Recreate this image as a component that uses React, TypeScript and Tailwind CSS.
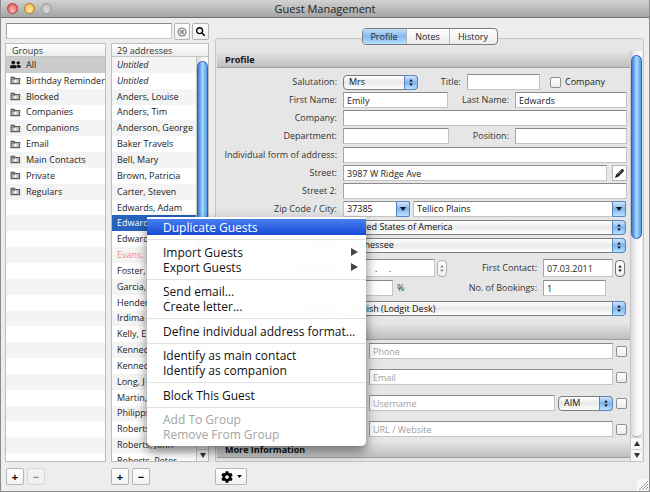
import { useState, type ReactNode } from "react";
import { FaCog, FaSearch, FaUserFriends } from "react-icons/fa";

const groups = [
  "All",
  "Birthday Reminder",
  "Blocked",
  "Companies",
  "Companions",
  "Email",
  "Main Contacts",
  "Private",
  "Regulars",
];

const addresses = [
  "Untitled",
  "Untitled",
  "Anders, Louise",
  "Anders, Tim",
  "Anderson, George",
  "Baker Travels",
  "Bell, Mary",
  "Brown, Patricia",
  "Carter, Steven",
  "Edwards, Adam",
  "Edwards",
  "Edwards",
  "Evans,",
  "Foster,",
  "Garcia,",
  "Henders",
  "Irdima",
  "Kelly, E",
  "Kenned",
  "Kenned",
  "Long, J",
  "Martin,",
  "Philipps",
  "Roberts",
  "Roberts, John",
  "Roberts, Peter",
];

const SELECTED = 10;
const ROW_COUNT = 26;

const menu = [
  ["Duplicate Guests"],
  ["Import Guests", "Export Guests"],
  ["Send email...", "Create letter..."],
  ["Define individual address format..."],
  ["Identify as main contact", "Identify as companion"],
  ["Block This Guest"],
  ["Add To Group", "Remove From Group"],
];

const field =
  "h-4 min-w-0 border border-[#c4c4c4] border-t-[#8a8a8a] border-l-[#a5a5a5] bg-white px-[3px] text-[9px] leading-3 text-[#222] outline-none placeholder:text-[#a0a0a0]";
const box =
  "size-[11px] shrink-0 appearance-none rounded-[2px] border border-[#8f8f8f] bg-linear-to-b from-white to-[#ececec]";
const smallButton =
  "flex h-[17px] items-center justify-center rounded-[2px] border border-[#b4b4b4] bg-linear-to-b from-white to-[#f1f1f1] text-black";

function FolderIcon() {
  return (
    <svg viewBox="0 0 12 10" className="h-[9px] w-[11px]" fill="none">
      <path d="M1 8.5V1.5h3.6l1 1.3h5v5.7z" fill="#b5b5b5" stroke="#5c5c5c" strokeWidth="1.2" />
      <path d="M1 3.4h4.5" stroke="#5c5c5c" />
      <circle cx="5.9" cy="5.8" r="1.6" fill="#f4f4f4" />
    </svg>
  );
}

function Arrows({ dim = false }: { dim?: boolean }) {
  return (
    <svg viewBox="0 0 6 10" className="h-[9px] w-[6px]" fill={dim ? "#888" : "#111"}>
      <path d="M3 1l2 2.8H1zM3 9l2-2.8H1z" />
    </svg>
  );
}

function Popup({ id, label, options, combo = false, className = "" }: {
  id: string;
  label?: string;
  options: string[];
  combo?: boolean;
  className?: string;
}) {
  const shape = combo
    ? "h-4 border border-[#c4c4c4] border-t-[#8a8a8a] bg-white pl-[3px]"
    : "h-[15px] rounded-[4px] border border-[#7d7d7d] bg-linear-to-b from-white via-[#e9e9e9] to-white pl-[5px]";
  return (
    <div className={`relative ${className}`}>
      <select
        id={id}
        aria-label={label}
        className={`block w-full appearance-none text-[9px] leading-3 text-[#111] outline-none ${shape}`}
      >
        {options.map((o) => <option key={o}>{o}</option>)}
      </select>
      <span
        className={`pointer-events-none absolute inset-y-0 right-0 flex w-[14px] items-center justify-center border border-[#5b86c2] bg-linear-to-b from-[#d5e7fb] via-[#7db3ee] to-[#b9e2ff] ${combo ? "rounded-r-[2px]" : "rounded-r-[4px]"}`}
      >
        {combo ? (
          <svg viewBox="0 0 6 4" className="h-1 w-[6px]"><path d="M0 0h6L3 4z" fill="#111" /></svg>
        ) : (
          <Arrows />
        )}
      </span>
    </div>
  );
}

function Label({ htmlFor, children, className = "w-[120px]" }: { htmlFor: string; children: ReactNode; className?: string }) {
  return (
    <label htmlFor={htmlFor} className={`shrink-0 whitespace-nowrap text-right text-[9px] leading-3 text-[#333] ${className}`}>
      {children}
    </label>
  );
}

function Row({ children, className = "h-4" }: { children: ReactNode; className?: string }) {
  return <div className={`flex items-center gap-[6px] ${className}`}>{children}</div>;
}

function SectionHeader({ children }: { children: ReactNode }) {
  return (
    <h2 className="h-[17px] shrink-0 border-b border-[#9c9c9c] bg-linear-to-b from-[#e6e6e6] to-[#bebebe] pl-2 text-[9px] font-bold leading-[17px] text-[#111]">
      {children}
    </h2>
  );
}

function Stepper({ dim = false }: { dim?: boolean }) {
  return (
    <button
      aria-label="Change date"
      className={`flex h-[17px] w-[10px] shrink-0 items-center justify-center rounded-[4px] border bg-linear-to-b from-white to-[#eee] ${dim ? "border-[#b0b0b0]" : "border-[#777]"}`}
    >
      <Arrows dim={dim} />
    </button>
  );
}

function ScrollArrow({ up = false }: { up?: boolean }) {
  return (
    <button aria-label={up ? "Scroll up" : "Scroll down"} className="flex h-3 w-full shrink-0 items-center justify-center border-t border-[#d0d0d0] bg-[#f7f7f7]">
      <svg viewBox="0 0 6 5" className="h-[5px] w-[6px]" fill="#333">
        <path d={up ? "M3 0l3 5H0z" : "M0 0h6L3 5z"} />
      </svg>
    </button>
  );
}

function Scrollbar({ thumb, className = "" }: { thumb: string; className?: string }) {
  return (
    <div className={`flex w-[12px] shrink-0 flex-col border-l border-[#c8c8c8] ${className}`}>
      <div className="min-h-0 flex-1 rounded-b-[5px] border-b border-[#aaa] bg-linear-to-r from-[#d9d9d9] via-[#f6f6f6] to-white pt-1">
        <div className={`w-[11px] rounded-full border border-[#2c62b8] bg-linear-to-r from-[#3a7cd6] via-[#a8d8ff] to-[#4f9dea] ${thumb}`} />
      </div>
      <ScrollArrow up />
      <ScrollArrow />
    </div>
  );
}

function Sidebar() {
  return (
    <div className="flex w-[204px] shrink-0 flex-col">
      <div className="flex h-4 gap-[2px] pl-px">
        <input aria-label="Search guests" className={`${field} flex-1`} />
        <button aria-label="Clear search" className={`${smallButton} w-4`}>
          <svg viewBox="0 0 10 10" className="size-[10px]">
            <circle cx="5" cy="5" r="4.6" fill="#8b8b8b" />
            <circle cx="5" cy="5" r="3.2" fill="#f5f5f5" />
            <path d="M3 3l4 4M7 3L3 7" stroke="#808080" strokeWidth="1.3" />
          </svg>
        </button>
        <button aria-label="Search" className={`${smallButton} w-[17px]`}>
          <FaSearch className="size-[9px]" />
        </button>
      </div>

      {/* Groups and addresses */}
      <div className="mt-1 flex min-h-0 flex-1 gap-[5px]">
        <div className="flex w-[101px] flex-col overflow-hidden border border-[#bdbdbd] bg-white">
          <h2 className="h-[13px] shrink-0 border-b border-[#c4c4c4] bg-linear-to-b from-white to-[#ececec] pl-[6px] text-[9px] leading-[13px] text-[#333]">
            Groups
          </h2>
          <ul className="flex h-[412px] shrink-0 flex-col">
            {Array.from({ length: ROW_COUNT }, (_, i) => (
              <li
                key={i}
                className={`flex flex-1 items-center gap-[5px] overflow-hidden whitespace-nowrap pl-1 text-[9px] leading-3 text-[#222] ${i === 0 ? "bg-[#c9cbcd]" : i % 2 === 0 ? "bg-[#f4f4f4]" : "bg-white"}`}
              >
                {groups[i] && (
                  <>
                    {i === 0 ? <FaUserFriends className="size-[11px] shrink-0 text-[#111]" /> : <span className="shrink-0"><FolderIcon /></span>}
                    {groups[i]}
                  </>
                )}
              </li>
            ))}
          </ul>
        </div>

        <div className="flex min-w-0 flex-1 flex-col overflow-hidden border border-[#bdbdbd] bg-white">
          <h2 className="h-[13px] shrink-0 border-b border-[#c4c4c4] bg-linear-to-b from-white to-[#ececec] pl-[5px] text-[9px] leading-[13px] text-[#333]">
            29 addresses
          </h2>
          <div className="flex min-h-0 flex-1">
            <div className="min-w-0 flex-1 overflow-hidden">
              <ul className="flex h-[412px] flex-col">
                {addresses.map((a, i) => (
                  <li
                    key={i}
                    className={`flex flex-1 items-center whitespace-nowrap pl-[5px] text-[9px] leading-3 ${i < 2 ? "italic" : ""} ${
                      i === SELECTED ? "bg-[#2763bd] text-white" : i === 12 ? "bg-[#f4f4f4] text-[#f08a86]" : i % 2 === 0 ? "bg-[#f4f4f4] text-[#222]" : "bg-white text-[#222]"
                    }`}
                  >
                    {a}
                  </li>
                ))}
              </ul>
            </div>
            <Scrollbar thumb="h-[300px]" />
          </div>
        </div>
      </div>
    </div>
  );
}

function ProfileForm() {
  return (
    <div className="flex flex-col gap-[2px] pb-[7px] pr-[3px] pt-[6px]">
      <Row>
        <Label htmlFor="salutation">Salutation:</Label>
        <Popup id="salutation" options={["Mrs", "Mr"]} className="w-[75px]" />
        <Label htmlFor="title" className="w-[37px]">Title:</Label>
        <input id="title" className={`${field} w-[73px]`} />
        <label className="flex items-center gap-1 pl-1 text-[9px] leading-3 text-[#222]">
          <input type="checkbox" className={box} />
          Company
        </label>
      </Row>
      <Row>
        <Label htmlFor="first">First Name:</Label>
        <input id="first" defaultValue="Emily" className={`${field} w-[105px]`} />
        <Label htmlFor="last" className="w-[55px]">Last Name:</Label>
        <input id="last" defaultValue="Edwards" className={`${field} flex-1`} />
      </Row>
      <Row>
        <Label htmlFor="company">Company:</Label>
        <input id="company" className={`${field} flex-1`} />
      </Row>
      <Row>
        <Label htmlFor="department">Department:</Label>
        <input id="department" className={`${field} w-[106px]`} />
        <Label htmlFor="position" className="w-[54px]">Position:</Label>
        <input id="position" className={`${field} flex-1`} />
      </Row>

      <div className="flex flex-col gap-[2px] pt-px">
        <Row>
          <Label htmlFor="form">Individual form of address:</Label>
          <input id="form" className={`${field} flex-1`} />
        </Row>
        <Row>
          <Label htmlFor="street">Street:</Label>
          <input id="street" defaultValue="3987 W Ridge Ave" className={`${field} flex-1`} />
          <button aria-label="Edit address" className="-ml-px flex h-4 w-[15px] items-center justify-center border border-[#b4b4b4] bg-white">
            <svg viewBox="0 0 12 12" className="size-[11px]">
              <path d="M1 11l1.4-3.8L8.2 1.4c1.2-1 3.3.8 2.3 2.2L4.8 9.5z" fill="#222" />
              <path d="M4 7l4.2-4.2" stroke="#aaa" strokeWidth=".8" />
            </svg>
          </button>
        </Row>
        <Row>
          <Label htmlFor="street2">Street 2:</Label>
          <input id="street2" className={`${field} flex-1`} />
        </Row>
        <Row>
          <Label htmlFor="zip">Zip Code / City:</Label>
          <Popup id="zip" combo options={["37385"]} className="w-[67px]" />
          <Popup id="city" label="City" combo options={["Tellico Plains"]} className="-ml-[3px] mr-px flex-1" />
        </Row>
      </div>

      <Row>
        <Label htmlFor="country">Country:</Label>
        <Popup id="country" options={["United States of America"]} className="mr-px flex-1" />
      </Row>
      <Row>
        <Label htmlFor="state">State:</Label>
        <Popup id="state" options={["Tennessee"]} className="mr-px flex-1" />
      </Row>

      <div className="flex flex-col gap-[3px] pt-1">
        <Row className="h-[18px]">
          <Label htmlFor="birthday">Birthday:</Label>
          <input id="birthday" defaultValue="            .     ." className={`${field} h-[18px] w-[92px]`} />
          <div className="-ml-1 flex"><Stepper dim /></div>
          <Label htmlFor="contact" className="w-[84px]">First Contact:</Label>
          <input id="contact" defaultValue="07.03.2011" className={`${field} h-[18px] flex-1`} />
          <div className="-ml-1 mr-[2px] flex"><Stepper /></div>
        </Row>
        <Row>
          <Label htmlFor="discount">Discount:</Label>
          <input id="discount" className={`${field} w-[50px]`} />
          <span className="-ml-[2px] w-2 text-[9px] leading-3 text-[#333]">%</span>
          <Label htmlFor="bookings" className="w-[126px]">No. of Bookings:</Label>
          <input id="bookings" defaultValue="1" className={`${field} w-[63px]`} />
        </Row>
        <Row className="mt-[2px] h-[15px]">
          <Label htmlFor="language">Language:</Label>
          <Popup id="language" options={["English (Lodgit Desk)"]} className="mr-px flex-1" />
        </Row>
      </div>
    </div>
  );
}

function ContactForm() {
  return (
    <div className="flex flex-col gap-[10px] pb-1 pl-[152px] pr-[3px] pt-[3px]">
      {["Phone", "Email", "Username", "URL / Website"].map((name) => (
        <div key={name} className="flex h-4 items-center gap-[3px]">
          <input aria-label={name} placeholder={name} className={`${field} flex-1`} />
          {name === "Username" && <Popup id="im" label="Messenger" options={["AIM"]} className="w-[55px]" />}
          <input type="checkbox" aria-label={`Default ${name}`} className={box} />
        </div>
      ))}
    </div>
  );
}

function ContextMenu() {
  return (
    <div
      role="menu"
      className="absolute left-[146px] top-[217px] flex h-[229px] w-[219px] flex-col rounded-b-[5px] rounded-tr-[2px] bg-white/98 pb-1 pt-[2px] shadow-[0_5px_12px_rgba(0,0,0,0.5)]"
    >
      {menu.map((items, g) => (
        <div key={g} className="contents">
          {g > 0 && (
            <div className="flex min-h-0 flex-1 items-center">
              <hr className="w-full border-[#e0e0e0]" />
            </div>
          )}
          {items.map((item) => (
            <button
              key={item}
              role="menuitem"
              disabled={g === 6}
              className={`flex shrink-0 items-center justify-between whitespace-nowrap pl-4 pr-2 text-left text-[12px] leading-[15px] ${
                g === 0 ? "h-4 bg-linear-to-b from-[#4a80ee] to-[#1747d8] text-white" : g === 6 ? "h-[15px] text-[#a3a3a3]" : "h-[15px] text-[#111]"
              }`}
            >
              {item}
              {g === 1 && <svg viewBox="0 0 7 8" className="h-2 w-[7px]"><path d="M0 0l7 4-7 4z" fill="#444" /></svg>}
            </button>
          ))}
        </div>
      ))}
    </div>
  );
}

export default function App() {
  const [tab, setTab] = useState("Profile");

  return (
    <div className="relative flex h-screen flex-col overflow-hidden border-x border-b border-[#8c8c8c] bg-[#ededed] font-['Open_Sans','Noto_Sans',sans-serif]">
      {/* Title bar */}
      <header className="relative flex h-[18px] shrink-0 items-center border-b border-[#6f6f6f] bg-linear-to-b from-[#d2d2d2] to-[#a5a5a5] pl-[6px]">
        <div className="flex gap-[6px]">
          <button aria-label="Close" className="size-[11px] rounded-full border border-[#a3403a] bg-radial-[at_50%_75%] from-[#ffc4bc] to-[#e8403c]" />
          <button aria-label="Minimize" className="size-[11px] rounded-full border border-[#b0742c] bg-radial-[at_50%_75%] from-[#fff3a8] to-[#f5a83c]" />
          <button aria-label="Zoom" className="size-[11px] rounded-full border border-[#9a9a9a] bg-radial-[at_50%_75%] from-[#dcdcdc] to-[#b4b4b4]" />
        </div>
        <h1 className="pointer-events-none absolute inset-x-0 text-center text-[11px] leading-4 text-[#222]">Guest Management</h1>
      </header>

      <main className="flex min-h-0 flex-1 gap-[6px] pl-1 pr-[5px] pt-[5px]">
        <Sidebar />

        <div className="flex min-w-0 flex-1 flex-col pt-[5px]">
          <div className="z-10 flex h-[17px] self-center overflow-hidden rounded-[4px] border border-[#7d7d7d] bg-linear-to-b from-white to-[#ececec]" role="tablist">
            {["Profile", "Notes", "History"].map((t) => (
              <button
                key={t}
                role="tab"
                aria-selected={tab === t}
                onClick={() => setTab(t)}
                className={`border-r border-[#b5b5b5] text-center text-[9px] font-medium leading-[15px] text-[#222] last:w-[47px] last:border-r-0 ${
                  t === "Notes" ? "w-[43px]" : "w-[44px]"
                } ${tab === t ? "bg-linear-to-b from-[#c4ddf8] via-[#85b9f1] to-[#b4e0ff]" : ""}`}
              >
                {t}
              </button>
            ))}
          </div>
          <div className="-mt-[7px] flex min-h-0 flex-1 rounded-t-[3px] border border-[#c6c6c6] bg-[#e6e6e6] pl-px pr-px pt-3">
            <div className="min-w-0 flex-1 overflow-hidden">
              <SectionHeader>Profile</SectionHeader>
              <ProfileForm />
              <SectionHeader>Contact</SectionHeader>
              <ContactForm />
              <SectionHeader>More Information</SectionHeader>
            </div>
            <Scrollbar thumb="h-[184px]" />
          </div>
        </div>
      </main>

      <footer className="flex h-[29px] shrink-0 items-start pl-[5px] pt-[6px]">
        <div className="flex w-[105px] gap-[3px] text-[11px] font-bold leading-3">
          <button aria-label="Add group" className={`${smallButton} w-[18px]`}>+</button>
          <button aria-label="Remove group" disabled className={`${smallButton} w-[18px] opacity-40`}>−</button>
        </div>
        <div className="flex w-[104px] gap-[3px] text-[11px] font-bold leading-3">
          <button aria-label="Add guest" className={`${smallButton} w-[18px]`}>+</button>
          <button aria-label="Remove guest" className={`${smallButton} w-[18px]`}>−</button>
        </div>
        <button aria-label="Actions" className={`${smallButton} w-8 gap-1`}>
          <FaCog className="size-3" />
          <svg viewBox="0 0 6 4" className="h-[3px] w-[5px]"><path d="M0 0h6L3 4z" /></svg>
        </button>
        <svg viewBox="0 0 12 12" className="ml-auto mt-[11px] size-3 self-start bg-[#f8f8f8]" stroke="#999">
          <path d="M2 11l9-9M5 11l6-6M8 11l3-3" />
        </svg>
      </footer>

      <ContextMenu />
    </div>
  );
}
